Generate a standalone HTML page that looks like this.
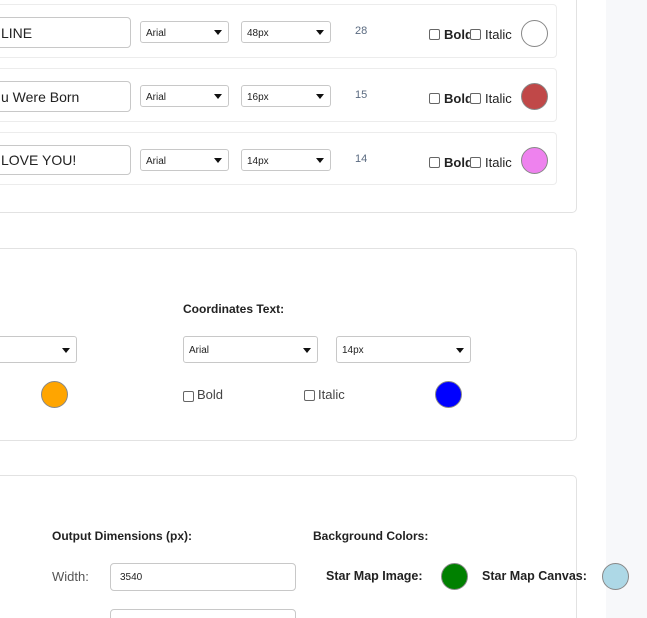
<!DOCTYPE html>
<html><head><meta charset="utf-8"><style>
*{box-sizing:border-box;margin:0;padding:0}
html,body{width:647px;height:618px;overflow:hidden}
body{background:#fff;font-family:"Liberation Sans",sans-serif;color:#222;position:relative}
.a{position:absolute}
.side{left:606px;top:0;width:41px;height:618px;background:#f7f8fa}
.card{border:1px solid #e2e2e2;border-radius:5px;background:#fff}
.row{border:1px solid #ececec;border-radius:4px}
.inp{border:1px solid #c8c8c8;border-radius:4px;background:#fff;font-size:14px;display:flex;align-items:center}
.sel{border:1px solid #c8c8c8;border-radius:3px;background:#fff;font-size:10px;display:flex;align-items:center;padding-left:5px;padding-top:2px}
.sel:after{content:"";position:absolute;right:6px;top:50%;margin-top:-2px;border-left:4px solid transparent;border-right:4px solid transparent;border-top:5px solid #111}
.cb{width:11px;height:11px;border:1px solid #666;border-radius:2px;background:#fff}
.dot{border-radius:50%;border:1px solid #888}
.t{font-size:13px;white-space:nowrap}
.b{font-weight:bold}
</style></head><body>
<div class="a side"></div>
<div class="a card" style="left:-10px;top:-10px;width:587px;height:223px"></div>
<div class="a card" style="left:-10px;top:248px;width:587px;height:193px"></div>
<div class="a card" style="left:-10px;top:475px;width:587px;height:160px"></div>

<div class="a row" style="left:-10px;top:4px;width:567px;height:54px"></div>
<div class="a row" style="left:-10px;top:68px;width:567px;height:54px"></div>
<div class="a row" style="left:-10px;top:132px;width:567px;height:53px"></div>

<div class="a inp" style="left:-20px;top:17px;width:151px;height:31px;padding-left:20px">LINE</div>
<div class="a inp" style="left:-20px;top:81px;width:151px;height:31px;padding-left:20px">u Were Born</div>
<div class="a inp" style="left:-20px;top:145px;width:151px;height:30px;padding-left:20px">LOVE YOU!</div>

<div class="a sel" style="left:140px;top:21px;width:89px;height:22px">Arial</div>
<div class="a sel" style="left:241px;top:21px;width:90px;height:22px">48px</div>
<div class="a sel" style="left:140px;top:85px;width:89px;height:22px">Arial</div>
<div class="a sel" style="left:241px;top:85px;width:90px;height:22px">16px</div>
<div class="a sel" style="left:140px;top:149px;width:89px;height:22px">Arial</div>
<div class="a sel" style="left:241px;top:149px;width:90px;height:22px">14px</div>

<div class="a t" style="left:355px;top:25px;font-size:11px;color:#5a6a80">28</div>
<div class="a t" style="left:355px;top:89px;font-size:11px;color:#5a6a80">15</div>
<div class="a t" style="left:355px;top:153px;font-size:11px;color:#5a6a80">14</div>

<div class="a cb" style="left:429px;top:29px"></div><div class="a t b" style="left:444px;top:27px">Bold</div><div class="a cb" style="left:470px;top:29px"></div><div class="a t" style="left:485px;top:27px">Italic</div>
<div class="a dot" style="left:521px;top:20px;width:27px;height:27px;background:#fff"></div>
<div class="a cb" style="left:429px;top:93px"></div><div class="a t b" style="left:444px;top:91px">Bold</div><div class="a cb" style="left:470px;top:93px"></div><div class="a t" style="left:485px;top:91px">Italic</div>
<div class="a dot" style="left:521px;top:83px;width:27px;height:27px;background:#c04848"></div>
<div class="a cb" style="left:429px;top:157px"></div><div class="a t b" style="left:444px;top:155px">Bold</div><div class="a cb" style="left:470px;top:157px"></div><div class="a t" style="left:485px;top:155px">Italic</div>
<div class="a dot" style="left:521px;top:147px;width:27px;height:27px;background:#ee82ee"></div>

<div class="a sel" style="left:-10px;top:336px;width:87px;height:27px"></div>
<div class="a dot" style="left:41px;top:381px;width:27px;height:27px;background:#ffa500"></div>
<div class="a t b" style="left:183px;top:302px;font-size:12px">Coordinates Text:</div>
<div class="a sel" style="left:183px;top:336px;width:135px;height:27px">Arial</div>
<div class="a sel" style="left:336px;top:336px;width:135px;height:27px">14px</div>
<div class="a cb" style="left:183px;top:391px"></div><div class="a t" style="left:197px;top:387px;color:#444">Bold</div>
<div class="a cb" style="left:304px;top:390px"></div><div class="a t" style="left:318px;top:387px;color:#444">Italic</div>
<div class="a dot" style="left:435px;top:381px;width:27px;height:27px;background:#0000ff"></div>

<div class="a t b" style="left:52px;top:529px;font-size:12px">Output Dimensions (px):</div>
<div class="a t b" style="left:313px;top:529px;font-size:12px">Background Colors:</div>
<div class="a t" style="left:52px;top:569px;color:#555">Width:</div>
<div class="a inp" style="left:110px;top:563px;width:186px;height:28px;font-size:10px;padding-left:9px">3540</div>
<div class="a inp" style="left:110px;top:609px;width:186px;height:28px"></div>
<div class="a t" style="left:52px;top:619px;color:#555">Height:</div>
<div class="a t b" style="left:326px;top:569px;font-size:12.5px">Star Map Image:</div>
<div class="a dot" style="left:441px;top:563px;width:27px;height:27px;background:#008000"></div>
<div class="a t b" style="left:482px;top:569px;font-size:12.5px">Star Map Canvas:</div>
<div class="a dot" style="left:602px;top:563px;width:27px;height:27px;background:#add8e6"></div>
</body></html>
